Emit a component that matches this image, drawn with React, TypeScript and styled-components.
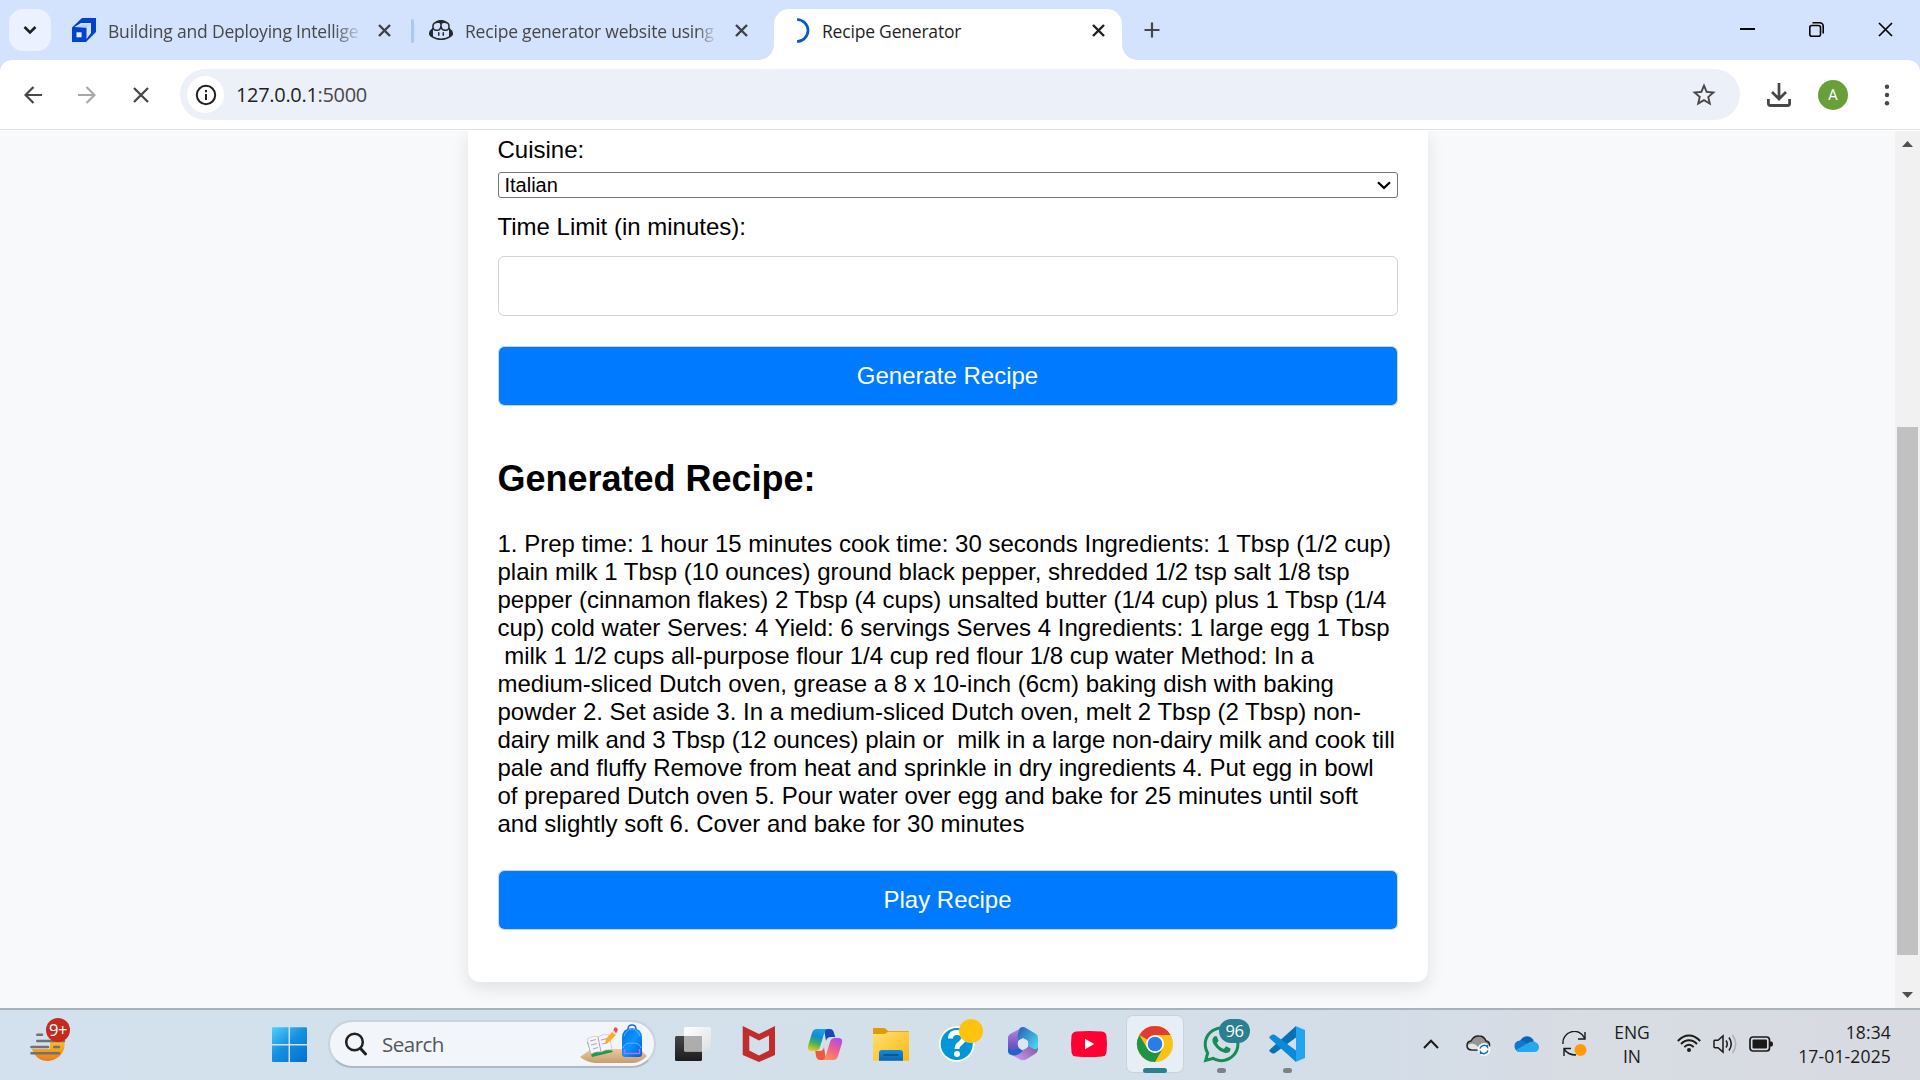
import React from "react";
import styled, { createGlobalStyle } from "styled-components";
import { GoCopilot } from "react-icons/go";
import { FaWhatsapp } from "react-icons/fa";
import { MdStarOutline } from "react-icons/md";

const Global = createGlobalStyle`
  * { box-sizing: border-box; }
  html, body { margin: 0; padding: 0; overflow: hidden; }
  svg { display: block; flex: none; }
`;

const uiFont = `"Open Sans", "Noto Sans", sans-serif`;
const pageFont = `"Liberation Sans", Arial, sans-serif`;

const Screen = styled.div`
  width: 1920px;
  height: 1080px;
  display: flex;
  flex-direction: column;
  background: #d3e2fd;
  overflow: hidden;
  font-family: ${uiFont};
`;

/* ---------- tab strip ---------- */
const TabStrip = styled.div`
  height: 60px;
  flex: none;
  display: flex;
  align-items: flex-start;
  padding: 9px 27px 0 9px;
`;

const TabSearch = styled.button`
  width: 42px;
  height: 42px;
  border: 0;
  padding: 0;
  border-radius: 14px;
  background: #ebf1fe;
  display: grid;
  place-items: center;
`;

const Tab = styled.div<{ $width: number; $left: number; $right: number; $active?: boolean }>`
  position: relative;
  width: ${(p) => p.$width}px;
  height: ${(p) => (p.$active ? 51 : 42)}px;
  padding: 0 ${(p) => p.$right}px 0 ${(p) => p.$left}px;
  display: flex;
  align-items: flex-start;
  border-radius: 15px 15px 0 0;
  background: ${(p) => (p.$active ? "#fff" : "transparent")};
  color: ${(p) => (p.$active ? "#1f1f1f" : "#474747")};
  &::before,
  &::after {
    content: "";
    display: ${(p) => (p.$active ? "block" : "none")};
    position: absolute;
    bottom: 0;
    width: 15px;
    height: 15px;
  }
  &::before {
    left: -15px;
    background: radial-gradient(circle at 0 0, transparent 14.5px, #fff 15px);
  }
  &::after {
    right: -15px;
    background: radial-gradient(circle at 100% 0, transparent 14.5px, #fff 15px);
  }
`;

const TabIcon = styled.span`
  width: 24px;
  height: 42px;
  display: grid;
  place-items: center;
`;

const TabTitle = styled.span<{ $gap: number; $fade?: number }>`
  margin-left: ${(p) => p.$gap}px;
  height: 42px;
  line-height: 45px;
  font-size: 17.5px;
  letter-spacing: -0.2px;
  white-space: nowrap;
  mask-image: ${(p) => (p.$fade ? `linear-gradient(to right, #000 calc(100% - ${p.$fade}px), rgba(0, 0, 0, 0.15))` : "none")};
`;

const TabClose = styled.span`
  margin-left: auto;
  width: 24px;
  height: 42px;
  display: grid;
  place-items: center;
`;

const TabDivider = styled.div`
  width: 3px;
  height: 24px;
  margin: 10px 0 0 3px;
  border-radius: 2px;
  background: #a8c7fa;
`;

const NewTab = styled.div`
  width: 42px;
  height: 42px;
  margin-left: 9px;
  display: grid;
  place-items: center;
`;

const WindowControls = styled.div`
  margin: 13px 0 0 auto;
  display: flex;
  gap: 54px;
`;

/* ---------- address bar ---------- */
const Toolbar = styled.div`
  height: 71px;
  flex: none;
  display: flex;
  align-items: center;
  padding: 0 18px 2px 12px;
  background: linear-gradient(to bottom, #fff 69px, #dfe1e3 69px, #dfe1e3 70px, #fff 70px);
  border-radius: 12px 12px 0 0;
`;

const ToolButton = styled.div<{ $width: number }>`
  width: ${(p) => p.$width}px;
  flex: none;
  height: 42px;
  display: grid;
  place-items: center;
`;

const Omnibox = styled.div`
  width: 1560px;
  flex: none;
  height: 51px;
  margin-left: 6px;
  border-radius: 26px;
  background: #ecf0f9;
  display: flex;
  align-items: center;
  padding: 0 22px 0 7px;
`;

const SiteInfo = styled.div`
  width: 37px;
  height: 37px;
  border-radius: 50%;
  background: #fff;
  display: grid;
  place-items: center;
`;

const Url = styled.div`
  flex: 1;
  margin-left: 12px;
  font-size: 20px;
  letter-spacing: -0.32px;
  line-height: 48px;
  color: #1f1f1f;
  span { color: #474747; }
`;

const Avatar = styled.div`
  width: 30px;
  height: 30px;
  flex: none;
  margin: 0 24px 0 12px;
  border-radius: 50%;
  background: #689f38;
  color: #fff;
  font: 15px/31px Roboto, sans-serif;
  text-align: center;
`;

/* ---------- web page ---------- */
const Viewport = styled.div`
  height: 877px;
  flex: none;
  display: flex;
  background: #f8f9fb;
  overflow: hidden;
`;

const PageBody = styled.div`
  width: 1895px;
  display: flex;
  justify-content: center;
  align-items: flex-start;
  overflow: hidden;
`;

const Card = styled.div`
  width: 960px;
  height: 851px;
  padding: 5px 30px 0;
  display: flex;
  flex-direction: column;
  background: #fff;
  border-radius: 0 0 12px 12px;
  box-shadow: 0 6px 18px rgba(0, 0, 0, 0.1);
  font: 24px/28px ${pageFont};
  color: #000;
`;

const Label = styled.label<{ $space: number }>`
  height: 28px;
  margin-bottom: ${(p) => p.$space}px;
`;

const SelectBox = styled.div`
  height: 26px;
  margin-bottom: 15px;
  padding: 0 6px;
  border: 1px solid #767676;
  border-radius: 3px;
  display: flex;
  justify-content: space-between;
  align-items: center;
  font-size: 20px;
  line-height: 24px;
`;

const TimeInput = styled.input`
  height: 60px;
  width: 100%;
  flex: none;
  margin: 0 0 30px;
  border: 1px solid #ced4da;
  border-radius: 6px;
  background: #fff;
  outline: none;
`;

const ActionButton = styled.button`
  height: 60px;
  width: 100%;
  flex: none;
  padding: 0 0 1px;
  border: 1px solid #ced4da;
  border-radius: 6px;
  background: #007bff;
  background-clip: padding-box;
  color: #fff;
  font: 24px/28px ${pageFont};
`;

const Heading = styled.h2`
  margin: 51px 0 30px;
  height: 43px;
  font: bold 36px/43px ${pageFont};
`;

const RecipeText = styled.p`
  margin: 0 0 32px;
  white-space: pre;
`;

const Scrollbar = styled.div`
  width: 25px;
  display: flex;
  flex-direction: column;
  align-items: center;
  background: #f1f1f1;
`;

const ScrollArrow = styled.div`
  height: 26px;
  display: grid;
  place-items: center;
`;

const ScrollTrack = styled.div`
  flex: 1;
  padding-top: 270px;
`;

const ScrollThumb = styled.div`
  width: 21px;
  height: 528px;
  background: #c1c1c1;
`;

/* ---------- taskbar ---------- */
const Taskbar = styled.div`
  height: 72px;
  flex: none;
  display: flex;
  border-top: 2px solid #a9b1b9;
  background: linear-gradient(to right, #d2e1ed, #d3e0ea 50%, #d3dde8 72%, #d8dce3 82%, #d7dbe1);
`;

const WeatherSlot = styled.div`
  position: relative;
  width: 256px;
  padding-left: 30px;
`;

const Slot = styled.div`
  position: relative;
  width: 66px;
  height: 70px;
`;

const Tile = styled.div`
  position: absolute;
  z-index: 0;
  left: 5px;
  top: 6px;
  width: 56px;
  height: 56px;
  border-radius: 6px;
  background: #e8eef5;
  box-shadow: 0 0 0 1px #c8d3de;
  & + svg { position: relative; z-index: 1; }
`;

const Badge = styled.div<{ $left: number; $top: number; $width: number; $color: string }>`
  position: absolute;
  z-index: 2;
  left: ${(p) => p.$left}px;
  top: ${(p) => p.$top}px;
  width: ${(p) => p.$width}px;
  height: 24px;
  border-radius: 12px;
  background: ${(p) => p.$color};
  color: #fff;
  font-size: 16.5px;
  line-height: 23px;
  letter-spacing: -0.4px;
  text-align: center;
`;

const RunningMark = styled.div<{ $active?: boolean }>`
  position: absolute;
  z-index: 2;
  left: ${(p) => (p.$active ? 21 : 29)}px;
  top: 58px;
  width: ${(p) => (p.$active ? 24 : 9)}px;
  height: 5px;
  border-radius: 3px;
  background: ${(p) => (p.$active ? "#2a8090" : "#7c8288")};
`;

const WhatsAppMark = styled.div`
  display: grid;
  place-items: center;
  width: 66px;
  height: 68px;
  color: #178c55;
`;

const SearchBox = styled.div`
  width: 328px;
  height: 48px;
  margin: 10px 4px 0 6px;
  padding: 0 5px 0 15px;
  border: 2px solid #c6d2dd;
  border-bottom-color: #adb9c4;
  border-radius: 24px;
  background: #f2f6fa;
  display: flex;
  align-items: center;
`;

const SearchLabel = styled.span`
  flex: 1;
  margin-left: 15px;
  font-size: 20.5px;
  letter-spacing: -0.5px;
  line-height: 40px;
  color: #54575a;
`;

const Tray = styled.div`
  margin-left: auto;
  padding: 0 29px 2px 0;
  display: flex;
  align-items: center;
  color: #1a1a1a;
`;

const TrayIcon = styled.div<{ $after: number }>`
  margin-right: ${(p) => p.$after}px;
`;

const TrayText = styled.div<{ $width: number; $align: string; $spacing: number }>`
  width: ${(p) => p.$width}px;
  text-align: ${(p) => p.$align};
  font-size: 17.5px;
  line-height: 24px;
  letter-spacing: ${(p) => p.$spacing}px;
  white-space: nowrap;
`;

const Cross = ({ size, color, weight }: { size: number; color: string; weight: number }) => (
  <svg width={size} height={size} viewBox={`0 0 ${size} ${size}`}>
    <path d={`M1 1L${size - 1} ${size - 1}M${size - 1} 1L1 ${size - 1}`} stroke={color} strokeWidth={weight} />
  </svg>
);

const CourseIcon = () => (
  <svg width="24" height="24" viewBox="0 0 24 24">
    <path d="M10 0H24V14L14 24H0V9.500Z" fill="#0043ce" />
    <path d="M2.500 9L9 5H19V15L14.500 21V9.500Z" fill="#d3e2fd" />
    <path d="M5 9L10 6.500H18L14.500 10Z" fill="#a6c4fa" opacity=".6" />
    <path d="M0 10H14V24H0Z" fill="#0043ce" />
    <path d="M4.500 14.300H9.600V19.300H4.500Z" fill="#e8effd" />
  </svg>
);

const TaskIcon = ({ children }: { children: React.ReactNode }) => (
  <svg width="66" height="70" viewBox="0 0 66 70">{children}</svg>
);

const WeatherIcon = () => (
  <svg width="40" height="70" viewBox="0 0 40 70">
    <defs>
      <linearGradient id="sun" x2="0" y2="1"><stop stopColor="#f9bd25" /><stop offset="1" stopColor="#ee7a12" /></linearGradient>
    </defs>
    <path d="M2 39H20V31.500H34.500A17 17 0 0 1 18 51Q6 51 2 39Z" fill="url(#sun)" />
    <g stroke="#6f7274" strokeWidth="2.600" strokeLinecap="round">
      <path d="M7.300 24.800H12M7.300 31H34M1.500 37H18M24.300 37H29M1.500 43.200H29" />
    </g>
  </svg>
);

const StartIcon = () => (
  <TaskIcon>
    <defs>
      <linearGradient id="win" gradientUnits="userSpaceOnUse" x1="16" y1="17" x2="46" y2="52">
        <stop stopColor="#4fd1fd" /><stop offset=".5" stopColor="#1590e0" /><stop offset="1" stopColor="#0572d2" />
      </linearGradient>
    </defs>
    <path d="M17 17.300H32.500V34H16V18.300Q16 17.300 17 17.300ZM34 17.300H50Q51 17.300 51 18.300V34H34ZM16 35.500H32.500V52H17Q16 52 16 51ZM34 35.500H51V51Q51 52 50 52H34Z" fill="url(#win)" />
  </TaskIcon>
);

const DeskArt = () => (
  <svg width="70" height="44" viewBox="0 0 70 44">
    <defs>
      <linearGradient id="bag" x2="1" y2="1"><stop stopColor="#0571dd" /><stop offset=".5" stopColor="#0d93ff" /><stop offset="1" stopColor="#0459cf" /></linearGradient>
      <linearGradient id="wood" x2="0" y2="1"><stop stopColor="#edc89c" /><stop offset="1" stopColor="#c99d6d" /></linearGradient>
    </defs>
    <path d="M12 27H61L68 34Q62 40 55 41H16Q7 40 1 35Z" fill="url(#wood)" />
    <path d="M8 20L13 35L34 30L31 26Z" fill="#1d9b47" />
    <path d="M8 17Q15 13 19 15Q25 11 30 13L33 28Q27 27 22 30Q17 29 12 32Z" fill="#f7f4fc" stroke="#bab8cb" strokeWidth=".6" />
    <path d="M19 15L22 30M11 19L17 17.500M12 23L18 21.500M22 18L28 16.500M23 22L29 20.500M14 27L19 25.500" stroke="#a9a5be" strokeWidth="1" />
    <path d="M26 22L27 17L33 10L37 13L30 20Z" fill="#ffac24" />
    <path d="M33 10L35 8L39 11L37 13Z" fill="#efd7e0" />
    <path d="M34.500 8Q35 4 38 6Q40 8 37 11Z" fill="#f04b57" />
    <path d="M49 7Q49 3 53 3Q57 3 57 7" fill="none" stroke="#2868ce" strokeWidth="1.500" />
    <path d="M43 16Q43 6 53 6Q63 6 63 16V32Q63 35 60 35H46Q43 35 43 32Z" fill="url(#bag)" />
    <path d="M45 14Q48 7 53 7Q58 7 61 14M44 26Q45 21 53 21Q61 21 62 26" fill="none" stroke="#58bbff" strokeWidth="1" />
    <path d="M45.500 27V31.500H60.500V27" fill="none" stroke="#9a79ff" strokeWidth="1.600" />
  </svg>
);

const TaskViewIcon = () => (
  <TaskIcon>
    <defs>
      <linearGradient id="tvDark" x2="0" y2="1"><stop stopColor="#464646" /><stop offset="1" stopColor="#1c1c1c" /></linearGradient>
      <linearGradient id="tvLight" x2="1" y2="1"><stop stopColor="#fff" /><stop offset="1" stopColor="#dcdfe2" /></linearGradient>
    </defs>
    <rect x="15" y="26" width="27" height="25" rx="1.500" fill="url(#tvDark)" />
    <rect x="24" y="17" width="27" height="24.500" rx="1.500" fill="url(#tvLight)" />
    <path d="M24 26H42V41.500H25.500Q24 41.500 24 40Z" fill="#adadad" />
  </TaskIcon>
);

const ShieldIcon = () => (
  <TaskIcon>
    <path fillRule="evenodd" fill="#c12d2c" d="M16.700 16L33 24L49 16V45L33 52L16.700 45ZM23.300 25.500V40.500L33 45.500L43 40.500V25.500L33 30.500Z" />
  </TaskIcon>
);

const CopilotIcon = () => (
  <TaskIcon>
    <defs>
      <linearGradient id="cpA" x1=".6" y1="0" x2=".3" y2="1"><stop stopColor="#16a3ea" /><stop offset=".35" stopColor="#168bcc" /><stop offset=".65" stopColor="#3fb25b" /><stop offset="1" stopColor="#e8ca20" /></linearGradient>
      <linearGradient id="cpB" x1=".8" y1="0" x2=".3" y2="1"><stop stopColor="#a94df0" /><stop offset=".45" stopColor="#eb5a97" /><stop offset="1" stopColor="#fb8f51" /></linearGradient>
    </defs>
    <path d="M32 19H38Q41 19 42 23L43.300 27H39Q35 27 34 31Z" fill="#1748bd" />
    <path d="M34 50H28Q25 50 24 46L23.300 41H28Q31 41 32 37Z" fill="#f2563d" />
    <path d="M24 19H35Q33 20 32 24L28 37Q27 41 23 41H19Q15 40.500 16 36L20 23Q21 19.500 24 19Z" fill="url(#cpA)" />
    <path d="M42 50H31Q33 49 34 45L38 32Q39 28 43 28H47Q51 28.500 50 33L46 46Q45 49.500 42 50Z" fill="url(#cpB)" />
  </TaskIcon>
);

const FolderIcon = () => (
  <TaskIcon>
    <defs>
      <linearGradient id="fold" x2="1" y2="1"><stop stopColor="#ffdf72" /><stop offset="1" stopColor="#fab90f" /></linearGradient>
      <linearGradient id="foldBlue" x2="0" y2="1"><stop stopColor="#128bdc" /><stop offset="1" stopColor="#0866b4" /></linearGradient>
    </defs>
    <path d="M15 19Q15 18 16 18H26Q27.500 18 30 21H50Q51 21 51 22V30H15Z" fill="#dc9b08" />
    <path d="M15 24H26Q27.500 24 30 21.700H51V50.700H15Z" fill="url(#fold)" />
    <path d="M21 50.700V43Q21 40 24 40H42Q45 40 45 43V50.700Z" fill="url(#foldBlue)" />
    <path d="M26 45H40" stroke="#084e87" strokeWidth="1.600" strokeLinecap="round" />
  </TaskIcon>
);

const HelpIcon = () => (
  <TaskIcon>
    <circle cx="32.700" cy="34" r="17.800" fill="#fff" />
    <circle cx="32.700" cy="34" r="16" fill="#0096d8" />
    <path d="M26.500 28.500Q26.500 22.500 33 22.500Q39.500 22.500 39.500 28Q39.500 31 36 33.500Q33 35.500 33 39" fill="none" stroke="#fff" strokeWidth="4.800" />
    <circle cx="33" cy="44" r="3" fill="#fff" />
    <circle cx="47" cy="21" r="12" fill="#ffc20d" />
  </TaskIcon>
);

const OfficeIcon = () => (
  <TaskIcon>
    <defs>
      <linearGradient id="ofA" x2="0" y2="1"><stop stopColor="#b88ce9" /><stop offset=".6" stopColor="#7b57c8" /><stop offset="1" stopColor="#2860c3" /></linearGradient>
      <linearGradient id="ofB" x2="1" y2=".8"><stop stopColor="#265caf" /><stop offset="1" stopColor="#49d3f4" /></linearGradient>
      <linearGradient id="ofC" x1="1" x2="0" y2=".6"><stop stopColor="#7a5194" /><stop offset="1" stopColor="#c994ef" /></linearGradient>
    </defs>
    <path d="M33 17L21 23.500Q18 25 18 28V41Q18 45 23 45Q28 45 29 40L28 29Q28 27 33 25Z" fill="url(#ofA)" />
    <path d="M48 34V39Q48 42 45 44L36 49.500Q33 51 30 49.500L21 44.500Q25 45 29 42L38 37V32Z" fill="url(#ofC)" />
    <path d="M30 18Q33 16 36 18L46 24Q48 25 48 28V36Q48 40 44 39L38 36V31L33 28L28 31Q27 27 28 23Z" fill="url(#ofB)" />
    <path d="M18 36Q20 43 29 38L33 41L29 44Q24 47 20 44Q18 42 18 40Z" fill="#2763c5" />
    <circle cx="33" cy="34" r="5.300" fill="#dce6ee" />
  </TaskIcon>
);

const YouTubeIcon = () => (
  <TaskIcon>
    <path d="M20 21.500Q33 20.500 46 21.500Q50 22 50.500 26Q51.500 34 50.500 42Q50 46 46 46.500Q33 47.500 20 46.500Q16 46 15.500 42Q14.500 34 15.500 26Q16 22 20 21.500Z" fill="#ff0033" />
    <path d="M29 28.800L38.300 34L29 39.200Z" fill="#fff" />
  </TaskIcon>
);

const ChromeIcon = () => (
  <TaskIcon>
    <circle cx="33" cy="34" r="18" fill="#fbc116" />
    <path d="M33 34L17.400 25A18 18 0 0 1 48.600 25H33Z" fill="#e33b2e" />
    <path d="M17.400 25L25.200 38.500L33 43L40.800 38.500L33 52A18 18 0 0 1 17.400 25Z" fill="#1f9445" />
    <circle cx="33" cy="34" r="9" fill="#fff" />
    <circle cx="33" cy="34" r="7.300" fill="#2c7bea" />
  </TaskIcon>
);

const CodeIcon = () => (
  <TaskIcon>
    <path d="M42 16L17 38.500Q14.500 40.500 15.700 41.500L18 43.300Q19.500 44 21 43L42 27.500Z" fill="#0870b6" />
    <path d="M42 52L17 29.500Q14.500 27.500 15.700 26.500L18 24.700Q19.500 24 21 25L42 40.500Z" fill="#0a8bd9" />
    <path d="M41.500 16L51 20V48L41.500 52Q42 51 42 49V19Q42 17 41.500 16Z" fill="#24a3f1" />
  </TaskIcon>
);

const recipeLines = [
  "1. Prep time: 1 hour 15 minutes cook time: 30 seconds Ingredients: 1 Tbsp (1/2 cup)",
  "plain milk 1 Tbsp (10 ounces) ground black pepper, shredded 1/2 tsp salt 1/8 tsp",
  "pepper (cinnamon flakes) 2 Tbsp (4 cups) unsalted butter (1/4 cup) plus 1 Tbsp (1/4",
  "cup) cold water Serves: 4 Yield: 6 servings Serves 4 Ingredients: 1 large egg 1 Tbsp",
  " milk 1 1/2 cups all-purpose flour 1/4 cup red flour 1/8 cup water Method: In a",
  "medium-sliced Dutch oven, grease a 8 x 10-inch (6cm) baking dish with baking",
  "powder 2. Set aside 3. In a medium-sliced Dutch oven, melt 2 Tbsp (2 Tbsp) non-",
  "dairy milk and 3 Tbsp (12 ounces) plain or  milk in a large non-dairy milk and cook till",
  "pale and fluffy Remove from heat and sprinkle in dry ingredients 4. Put egg in bowl",
  "of prepared Dutch oven 5. Pour water over egg and bake for 25 minutes until soft",
  "and slightly soft 6. Cover and bake for 30 minutes",
];

export default function App() {
  return (
    <Screen>
      <Global />
      <TabStrip>
        <TabSearch>
          <svg width="14" height="10" viewBox="0 0 14 10"><path d="M1.500 2L7 7.500L12.500 2" fill="none" stroke="#1f1f1f" strokeWidth="2.600" /></svg>
        </TabSearch>
        <Tab $width={357} $left={21} $right={12}>
          <TabIcon><CourseIcon /></TabIcon>
          <TabTitle $gap={12} $fade={26}>Building and Deploying Intellige</TabTitle>
          <TabClose><Cross size={13} color="#3f4145" weight={2.4} /></TabClose>
        </Tab>
        <TabDivider />
        <Tab $width={360} $left={15} $right={21}>
          <TabIcon><GoCopilot size={24} color="#24292f" /></TabIcon>
          <TabTitle $gap={12} $fade={18}>Recipe generator website using</TabTitle>
          <TabClose><Cross size={13} color="#3f4145" weight={2.4} /></TabClose>
        </Tab>
        <Tab $width={348} $left={21} $right={12} $active>
          <TabIcon>
            <svg width="24" height="26" viewBox="0 0 24 26"><path d="M2 2A11 11 0 0 1 2 24" transform="translate(0 .5)" fill="none" stroke="#0b57d0" strokeWidth="2.700" /></svg>
          </TabIcon>
          <TabTitle $gap={3}>Recipe Generator</TabTitle>
          <TabClose><Cross size={13} color="#1f1f1f" weight={2.4} /></TabClose>
        </Tab>
        <NewTab>
          <svg width="16" height="16" viewBox="0 0 16 16"><path d="M8 .5V15.500M.5 8H15.500" stroke="#474747" strokeWidth="2.200" /></svg>
        </NewTab>
        <WindowControls>
          <svg width="15" height="15" viewBox="0 0 15 15"><path d="M0 7H15" stroke="#000" strokeWidth="2" /></svg>
          <svg width="15" height="15" viewBox="0 0 15 15" fill="none" stroke="#000" strokeWidth="1.600"><rect x=".8" y="3.500" width="10.700" height="10.700" rx="2" /><path d="M3.500 .8H10.500Q14.200 .8 14.200 4.500V11.500" /></svg>
          <Cross size={15} color="#000" weight={1.7} />
        </WindowControls>
      </TabStrip>

      <Toolbar>
        <ToolButton $width={42}>
          <svg width="18" height="18" viewBox="0 0 18 18"><path d="M18 9H2M9.500 1L1.500 9L9.500 17" fill="none" stroke="#474747" strokeWidth="2.200" /></svg>
        </ToolButton>
        <ToolButton $width={66}>
          <svg width="18" height="18" viewBox="0 0 18 18"><path d="M0 9H16M8.500 1L16.500 9L8.500 17" fill="none" stroke="#a9a9a9" strokeWidth="2.200" /></svg>
        </ToolButton>
        <ToolButton $width={42}><Cross size={16} color="#474747" weight={2.3} /></ToolButton>
        <ToolButton $width={12} />
        <Omnibox>
          <SiteInfo>
            <svg width="22" height="22" viewBox="0 0 22 22"><circle cx="11" cy="11" r="9.200" fill="none" stroke="#1f1f1f" strokeWidth="2" /><path d="M11 10V16M11 6V8.200" stroke="#1f1f1f" strokeWidth="2" /></svg>
          </SiteInfo>
          <Url>127.0.0.1<span>:5000</span></Url>
          <MdStarOutline size={28} color="#474747" />
        </Omnibox>
        <ToolButton $width={12} />
        <ToolButton $width={54}>
          <svg width="24" height="24" viewBox="0 0 24 24"><path d="M12 0V15M5 9L12 16L19 9" fill="none" stroke="#474747" strokeWidth="2.700" /><path d="M1.400 16V20.500Q1.400 22.500 3.400 22.500H20.600Q22.600 22.500 22.600 20.500V16" fill="none" stroke="#474747" strokeWidth="2.800" /></svg>
        </ToolButton>
        <Avatar>A</Avatar>
        <svg width="30" height="24" viewBox="0 0 30 24" fill="#474747"><circle cx="15" cy="3.700" r="2.200" /><circle cx="15" cy="12" r="2.200" /><circle cx="15" cy="20.300" r="2.200" /></svg>
      </Toolbar>

      <Viewport>
        <PageBody>
          <Card>
            <Label $space={8}>Cuisine:</Label>
            <SelectBox>
              Italian
              <svg width="14" height="9" viewBox="0 0 14 9"><path d="M1 1.200L7 7L13 1.200" fill="none" stroke="#000" strokeWidth="2.200" /></svg>
            </SelectBox>
            <Label $space={15}>Time Limit (in minutes):</Label>
            <TimeInput />
            <ActionButton>Generate Recipe</ActionButton>
            <Heading>Generated Recipe:</Heading>
            <RecipeText>{recipeLines.join("\n")}</RecipeText>
            <ActionButton>Play Recipe</ActionButton>
          </Card>
        </PageBody>
        <Scrollbar>
          <ScrollArrow><svg width="11" height="6" viewBox="0 0 11 6"><path d="M0 6L5.500 0L11 6Z" fill="#505050" /></svg></ScrollArrow>
          <ScrollTrack><ScrollThumb /></ScrollTrack>
          <ScrollArrow><svg width="11" height="6" viewBox="0 0 11 6"><path d="M0 0L5.500 6L11 0Z" fill="#505050" /></svg></ScrollArrow>
        </Scrollbar>
      </Viewport>

      <Taskbar>
        <WeatherSlot>
          <WeatherIcon />
          <Badge $left={46} $top={8} $width={24} $color="#c42b1c">9+</Badge>
        </WeatherSlot>
        <Slot><StartIcon /></Slot>
        <SearchBox>
          <svg width="22" height="24" viewBox="0 0 22 24"><circle cx="9.500" cy="10" r="8.300" fill="none" stroke="#222" strokeWidth="2.500" /><path d="M15.500 16.500L20.500 22" stroke="#222" strokeWidth="3" strokeLinecap="round" /></svg>
          <SearchLabel>Search</SearchLabel>
          <DeskArt />
        </SearchBox>
        <Slot><TaskViewIcon /></Slot>
        <Slot><ShieldIcon /></Slot>
        <Slot><CopilotIcon /></Slot>
        <Slot><FolderIcon /></Slot>
        <Slot><HelpIcon /></Slot>
        <Slot><OfficeIcon /></Slot>
        <Slot><YouTubeIcon /></Slot>
        <Slot><Tile /><ChromeIcon /><RunningMark $active /></Slot>
        <Slot>
          <WhatsAppMark><FaWhatsapp size={41} /></WhatsAppMark>
          <Badge $left={31} $top={9} $width={31} $color="#2a8090">96</Badge>
          <RunningMark />
        </Slot>
        <Slot><CodeIcon /><RunningMark /></Slot>
        <Tray>
          <TrayIcon $after={27}>
            <svg width="16" height="10" viewBox="0 0 16 10"><path d="M1 9L8 1.800L15 9" fill="none" stroke="#1a1a1a" strokeWidth="2" /></svg>
          </TrayIcon>
          <TrayIcon $after={23}>
            <svg width="25" height="24" viewBox="0 0 25 24">
              <path d="M6 18Q1 18 1 13.500Q1 9.500 5 9Q8 3.500 13 4Q18 4 20 9Q24 9.500 23.500 14Q23 18 19 18Z" fill="#949494" stroke="#222" strokeWidth="1.500" />
              <path d="M2 13Q6 10 10 13L14 17.200H6Q2 17 2 13Z" fill="#e5e5e5" />
              <circle cx="18" cy="17.500" r="6.500" fill="#fff" />
              <path d="M14 16.500A4.300 4.300 0 0 1 21.500 15V13M22 18.500A4.300 4.300 0 0 1 14.500 20V22" fill="none" stroke="#0f6fc5" strokeWidth="1.500" />
            </svg>
          </TrayIcon>
          <TrayIcon $after={23}>
            <svg width="25" height="24" viewBox="0 0 25 24">
              <path d="M6 9Q9 4 13.500 4.200Q18 4.500 20 9.500L14 15L6 13Z" fill="#0b64b8" />
              <path d="M5.500 20Q.5 19 .5 14Q.5 9 6 8.500Q10 8 13 12L17 20Z" fill="#0e78d4" />
              <path d="M5 20Q2 19 2 18L14 11Q17 9 20 9.500Q25 11 25 15Q25 20 20 20Z" fill="#28a8ea" />
            </svg>
          </TrayIcon>
          <TrayIcon $after={22}>
            <svg width="26" height="26" viewBox="0 0 26 26">
              <path d="M1 13A11.300 11.300 0 0 1 22.500 7M23 1V8H16M14 24Q6 24 2 18M2 25V17.500H9" fill="none" stroke="#1a1a1a" strokeWidth="1.400" />
              <circle cx="18.500" cy="19" r="6" fill="#ff9a0a" />
            </svg>
          </TrayIcon>
          <TrayText $width={44} $align="center" $spacing={-0.1}>ENG<br />IN</TrayText>
          <TrayIcon $after={12}>
            <svg width="47" height="24" viewBox="-23 0 47 24" fill="none" stroke="#1a1a1a" strokeWidth="1.900">
              <path d="M.8 9Q6 3.500 12 3.500Q18 3.500 23.200 9M4 12Q7.500 8.200 12 8.200Q16.500 8.200 20 12M7.300 15.200Q9.500 12.800 12 12.800Q14.500 12.800 16.700 15.200" />
              <circle cx="12" cy="18" r="2" fill="#1a1a1a" stroke="none" />
            </svg>
          </TrayIcon>
          <TrayIcon $after={11}>
            <svg width="25" height="24" viewBox="0 0 25 24" fill="none" stroke="#1a1a1a" strokeWidth="1.500">
              <path d="M1 9Q1 8.300 2 8.300H5L10 4V20L5 15.700H2Q1 15.700 1 15Z" />
              <path d="M13 8.500Q15.500 12 13 15.500M16 5.500Q20.500 12 16 18.500" />
              <path d="M19.500 3Q26 12 19.500 21" stroke="#aeb2b6" />
            </svg>
          </TrayIcon>
          <TrayIcon $after={0}>
            <svg width="25" height="24" viewBox="0 0 25 24">
              <rect x="1" y="5" width="19.500" height="14" rx="3" fill="none" stroke="#1a1a1a" strokeWidth="1.700" />
              <rect x="3.500" y="7.500" width="14.500" height="9" rx="1" fill="#1a1a1a" />
              <path d="M21 9.500H22.500Q24 9.500 24 12Q24 14.500 22.500 14.500H21Z" fill="#1a1a1a" />
            </svg>
          </TrayIcon>
          <TrayText $width={117} $align="right" $spacing={0.15}>18:34<br />17-01-2025</TrayText>
        </Tray>
      </Taskbar>
    </Screen>
  );
}
